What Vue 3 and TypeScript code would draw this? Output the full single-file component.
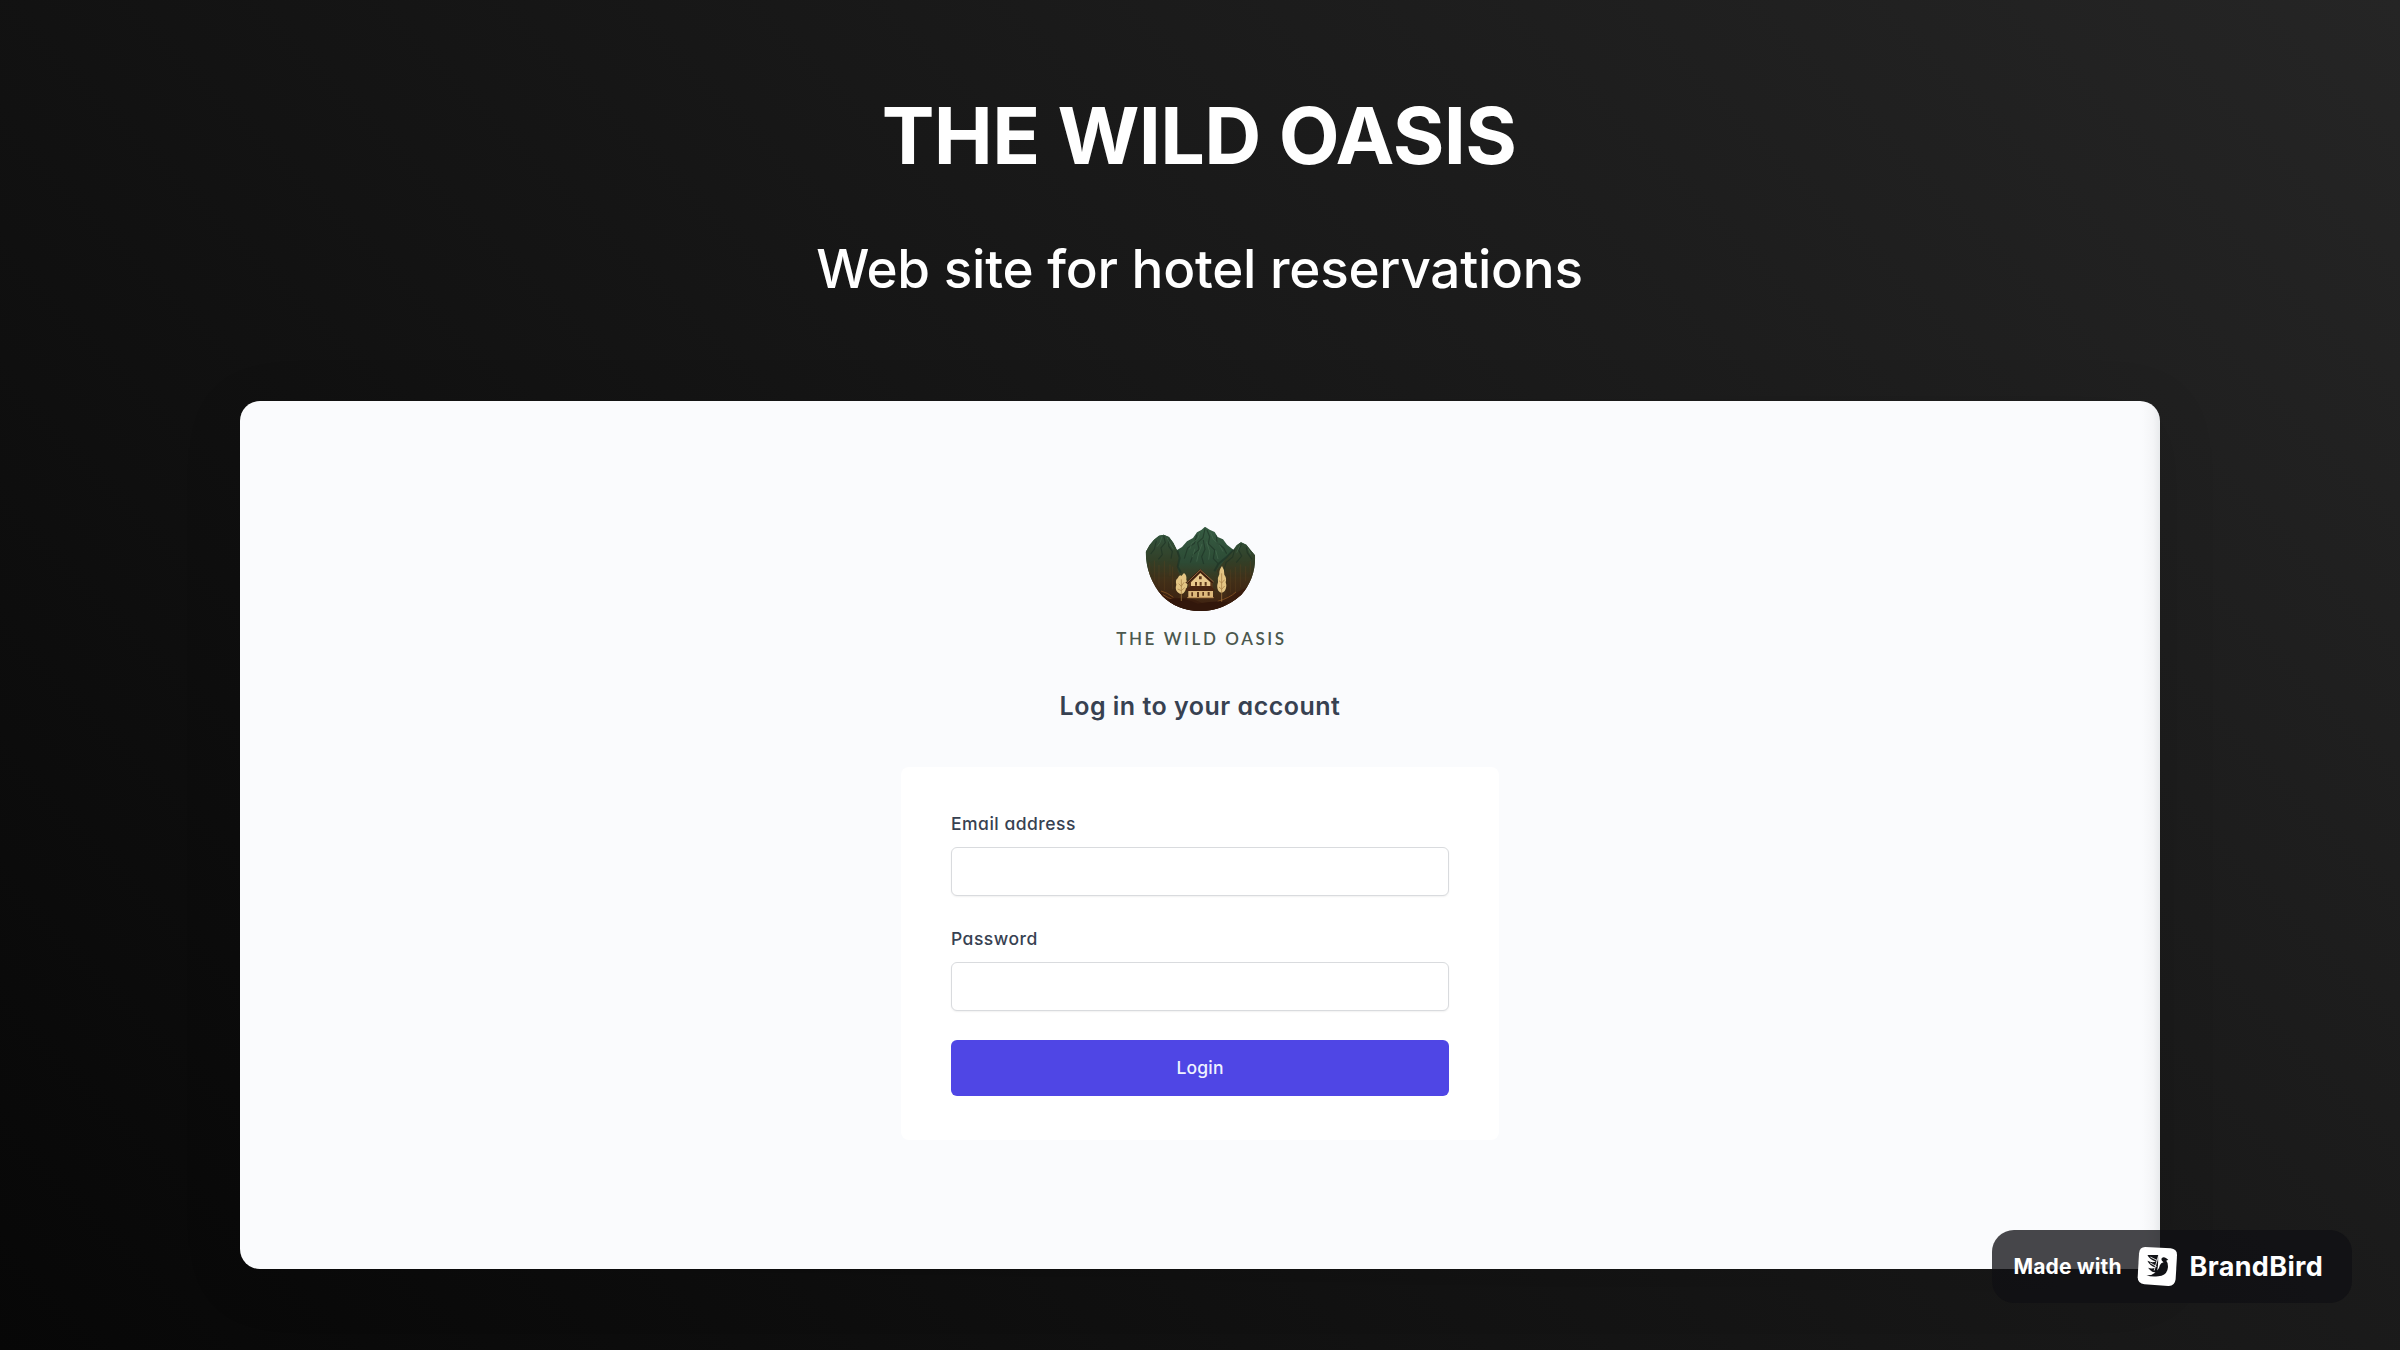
<script setup lang="ts">
import { ref } from 'vue'

interface Field {
  id: string
  label: string
  type: string
}

const fields: Field[] = [
  { id: 'email', label: 'Email address', type: 'text' },
  { id: 'password', label: 'Password', type: 'password' },
]
const values = ref<Record<string, string>>({ email: '', password: '' })
</script>

<template>
  <main class="stage">
    <h1 class="title"><span>THE WILD OASIS</span></h1>
    <p class="subtitle"><span>Web site for hotel reservations</span></p>

    <section class="window">
      <svg class="emblem" viewBox="130 74 345 270" aria-hidden="true">
        <defs>
          <linearGradient id="land" x1="0" y1="82" x2="0" y2="335" gradientUnits="userSpaceOnUse">
            <stop offset="0" stop-color="#375c43" />
            <stop offset="0.42" stop-color="#2d4c36" />
            <stop offset="0.62" stop-color="#3a3820" />
            <stop offset="0.82" stop-color="#432a15" />
            <stop offset="1" stop-color="#3e1e0f" />
          </linearGradient>
          <linearGradient id="side" x1="0" y1="105" x2="0" y2="320" gradientUnits="userSpaceOnUse">
            <stop offset="0" stop-color="#32543d" />
            <stop offset="0.35" stop-color="#324129" />
            <stop offset="0.65" stop-color="#412f18" />
            <stop offset="1" stop-color="#3c1f0f" />
          </linearGradient>
          <clipPath id="bowl">
            <path d="M138 158L150 137L163 121L178 109L192 106L208 113L221 130L232 152L247 143L262 126L280 116L292 99L305 92L316 82L330 91L345 98L354 113L370 120L382 136L401 151L411 137L424 129L440 136L452 151L466 168Q469 235 425 286Q370 335 302 335Q232 334 188 290Q140 236 138 158Z" />
          </clipPath>
        </defs>
        <g clip-path="url(#bowl)">
          <rect x="130" y="74" width="345" height="270" fill="url(#land)" />
          <path d="M130 100H205L222 130L238 165L234 215L252 250L220 340H130Z" fill="url(#side)" />
          <path d="M475 120H428L405 148L380 176L350 215L375 250L390 340H475Z" fill="url(#side)" />
          <g fill="none" stroke="#1c3023" stroke-width="3.5" opacity="0.6">
            <path d="M192 110L197 130L184 146L188 166L176 180M208 118L207 140L218 156L214 178M170 124L164 150L153 164" />
            <path d="M316 88L310 115L294 130L298 150L280 166L272 190M322 92L330 112L326 133L345 152L341 178L358 196M292 106L284 132L264 146L254 178M350 108L352 130L372 146L381 163M311 122L316 150L306 172L312 194" />
            <path d="M425 134L417 153L426 170L410 190M440 144L443 160L457 180M405 151L399 173L379 190L372 216" />
            <path d="M233 154L240 176L234 202L244 220M402 151L380 174L356 194L344 216" stroke-width="6" />
          </g>
          <g fill="none" stroke="#4c7055" stroke-width="2.5" opacity="0.65">
            <path d="M187 112L181 130L172 142M203 116L213 137L222 150M300 101L294 119L276 132L270 150M333 100L341 120L359 136L370 157M321 127L330 157L327 181M286 148L278 174M421 138L411 160M446 149L453 165M307 134L297 160L291 187M348 153L355 179" />
          </g>
          <g fill="none" stroke="#6a4a20" stroke-width="3" opacity="0.3">
            <path d="M150 190V228M164 183V244M178 197V262M194 184V273M211 195V230M219 202V270M392 210V280M407 203V278M422 195V264M438 201V246M452 185V228" />
          </g>
          <path d="M170 270Q210 300 240 296T300 308T400 286T450 266V344H160Z" fill="#3a1d0e" />
          <path d="M184 275Q204 280 221 294M190 286Q222 307 254 306M354 306Q390 296 409 278" fill="none" stroke="#875322" stroke-width="2.5" />
          <path d="M205 299Q250 292 294 313Q350 303 386 308L350 344H230Z" fill="#32170b" />
        </g>
        <g fill="#e3c483">
          <path d="M253 221Q262 228 260 241Q267 255 259 271L252 281Q243 288 234 279Q225 270 230 256Q226 242 234 237Q240 224 245 230Z" />
          <path d="M367 200Q376 213 374 226Q382 236 378 249Q383 263 375 275Q365 286 356 274Q350 263 355 249Q352 236 359 225Q358 211 367 200Z" />
        </g>
        <g fill="none" stroke="#a47d45" stroke-width="2.2">
          <path d="M245 240V305M237 253L245 261L253 249M234 269L245 274L255 265M366 222V307M358 244L366 251L375 241M358 263L366 270L375 260" />
        </g>
        <path d="M266 251L302 217L339 251V294H266Z" fill="#5b3519" />
        <path d="M274 249L302 221L332 249V262H274Z" fill="#e8c88c" />
        <path d="M266 274H340V294H266Z" fill="#dcb87c" />
        <path d="M257 250L302 209L343 249L337 251L302 219L264 254Z" fill="#381b0d" />
        <path d="M260 252L302 212L342 248" fill="none" stroke="#bd905a" stroke-width="2" />
        <path d="M258 268L273 260H334L344 271V275H258Z" fill="#482410" />
        <g fill="#5c3619">
          <path d="M298 231H306V240H298ZM286 248H292V259H286ZM300 248H306V259H300ZM315 248H321V259H315ZM275 279H280V291H275ZM292 278H298V293H292ZM308 278H313V289H308ZM324 278H330V289H324Z" />
        </g>
        <path d="M263 295H342" stroke="#c5975d" stroke-width="3" />
      </svg>
      <p class="wordmark"><span>THE WILD OASIS</span></p>

      <h2 class="heading"><span>Log in to your account</span></h2>

      <form class="login" @submit.prevent>
        <div v-for="field in fields" :key="field.id" class="field">
          <label :for="field.id">{{ field.label }}</label>
          <input :id="field.id" v-model="values[field.id]" :type="field.type" />
        </div>
        <button type="submit">Login</button>
      </form>
    </section>

    <aside class="badge">
      <span class="made">Made with</span>
      <svg class="bird" viewBox="48 48 122 122" aria-hidden="true">
        <path d="M72 51L148 55Q168 57 167 76L163 147Q160 168 141 167L70 162Q50 159 50 141L54 70Q56 51 72 51Z" fill="#fff" />
        <path d="M76 135Q93 136 103 127Q88 125 81 113Q94 117 103 112Q86 107 79 92Q92 99 104 94Q86 90 79 75H111V94Q111 106 108 121Q115 113 116 105Q119 97 127 96Q119 92 121 85Q127 78 134 84L141 89L135 92Q141 98 140 112Q137 137 111 138Q89 140 76 135Z" fill="#111216" />
        <path d="M88 81L108 91M87 98L106 109M112 77L99 121" stroke="#fff" stroke-width="2.5" fill="none" />
      </svg>
      <span class="brand">BrandBird</span>
    </aside>
  </main>
</template>

<style>
body {
  margin: 0;
  background: #111;
}
</style>

<style scoped>
.stage {
  position: relative;
  box-sizing: border-box;
  width: 2400px;
  height: 1350px;
  overflow: hidden;
  display: flex;
  flex-direction: column;
  align-items: center;
  padding-top: 87px;
  background: linear-gradient(45deg, #070707 0%, #252525 100%);
  color: #fff;
  font-family: Inter, "Liberation Sans", sans-serif;
}

.title,
.subtitle,
.wordmark,
.heading {
  margin: 0;
  white-space: nowrap;
}

.title {
  height: 97px;
  margin-right: 2px;
  font-size: 79px;
  line-height: 97px;
  font-weight: 700;
  letter-spacing: -0.68px;
}

.subtitle {
  height: 64px;
  margin-top: 53px;
  margin-right: 1px;
  font-size: 53px;
  line-height: 64px;
  font-weight: 500;
  letter-spacing: -0.25px;
}

.window {
  box-sizing: border-box;
  width: 1920px;
  height: 868px;
  margin-top: 100px;
  padding-top: 123px;
  display: flex;
  flex-direction: column;
  align-items: center;
  border-radius: 20px;
  background: linear-gradient(270deg, #e8eaec 0, #f4f5f7 7px, #fafbfd 18px, #fafbfd 100%);
  box-shadow: 0 12px 60px rgba(0, 0, 0, 0.12);
  color: #374151;
}

.emblem {
  width: 115px;
  height: 90px;
}

.wordmark {
  height: 22px;
  margin-top: 14px;
  color: #4b584e;
  font-family: Lato, sans-serif;
  font-size: 17px;
  line-height: 22px;
  font-weight: 600;
  letter-spacing: 2.6px;
  text-indent: 3px;
}

.heading {
  height: 36px;
  margin-top: 38px;
  font-size: 25px;
  line-height: 36px;
  font-weight: 600;
  letter-spacing: 0.5px;
  font-feature-settings: "cv11";
}

.login {
  box-sizing: border-box;
  width: 598px;
  height: 373px;
  margin-top: 43px;
  padding: 44px 50px 0;
  border-radius: 8px;
  background: #fff;
}

.field {
  height: 114.5px;
}

.field label {
  display: block;
  height: 26px;
  font-size: 17.5px;
  line-height: 26px;
  font-weight: 500;
  letter-spacing: 0.5px;
  font-feature-settings: "cv11";
}

.field input {
  box-sizing: border-box;
  display: block;
  width: 498px;
  height: 49px;
  margin-top: 10px;
  padding: 0 14px;
  border: 1px solid #d9dbde;
  border-radius: 6px;
  background: #fff;
  box-shadow: 0 1px 2px rgba(0, 0, 0, 0.06);
  outline: none;
}

.login button {
  display: block;
  width: 498px;
  height: 56px;
  padding: 0;
  border: 0;
  border-radius: 6px;
  background: #4f46e5;
  color: #eef2ff;
  font: 500 17.5px/56px Inter, sans-serif;
  letter-spacing: 0.2px;
}

.badge {
  position: absolute;
  box-sizing: border-box;
  left: 1991.5px;
  top: 1229.5px;
  width: 360px;
  height: 73px;
  padding-left: 22px;
  display: flex;
  align-items: center;
  border-radius: 22px;
  background: rgba(15, 16, 20, 0.77);
  white-space: nowrap;
}

.made {
  width: 123px;
  padding-top: 1px;
  font-size: 21px;
  font-weight: 700;
  letter-spacing: 0.15px;
}

.bird {
  flex: none;
  width: 41px;
  height: 41px;
}

.brand {
  margin-left: 12px;
  padding-top: 1px;
  font-size: 27px;
  font-weight: 700;
  letter-spacing: 0.35px;
}
</style>
